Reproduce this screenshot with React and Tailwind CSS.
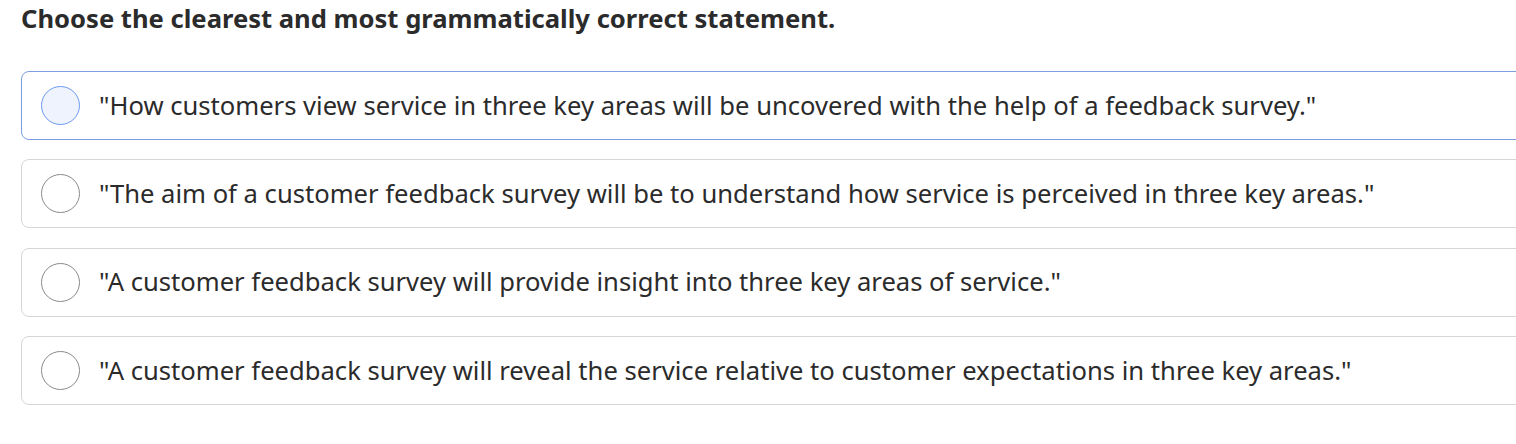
import React from "react";

const options = [
  "\"How customers view service in three key areas will be uncovered with the help of a feedback survey.\"",
  "\"The aim of a customer feedback survey will be to understand how service is perceived in three key areas.\"",
  "\"A customer feedback survey will provide insight into three key areas of service.\"",
  "\"A customer feedback survey will reveal the service relative to customer expectations in three key areas.\"",
];

export default function App() {
  return (
    <div
      className="w-[1516px] h-[444px] overflow-hidden bg-white pl-[21px] pt-[1px] text-[#2b2b2b]"
      style={{ fontFamily: '"Noto Sans", "Open Sans", sans-serif' }}
    >
      <h1 className="text-[25.6px] font-bold leading-[36px]">
        Choose the clearest and most grammatically correct statement.
      </h1>
      <div className="mt-[34px] flex w-[1520px] flex-col gap-[19.33px]">
        {options.map((text, i) => {
          const active = i === 0;
          return (
            <div
              key={i}
              className={
                active
                  ? "flex h-[69px] items-center rounded-[8px] border border-[#7b9fe0] pl-[19px]"
                  : "flex h-[69px] items-center rounded-[8px] border border-[#d6d6d6] pl-[19px]"
              }
            >
              <span
                className={
                  active
                    ? "h-[39px] w-[39px] shrink-0 rounded-full border border-[#6e9af0] bg-[#eef3fd]"
                    : "h-[39px] w-[39px] shrink-0 rounded-full border border-[#8a8a8a] bg-white"
                }
              />
              <span className="ml-[19px] text-[25.6px] leading-none">{text}</span>
            </div>
          );
        })}
      </div>
    </div>
  );
}
